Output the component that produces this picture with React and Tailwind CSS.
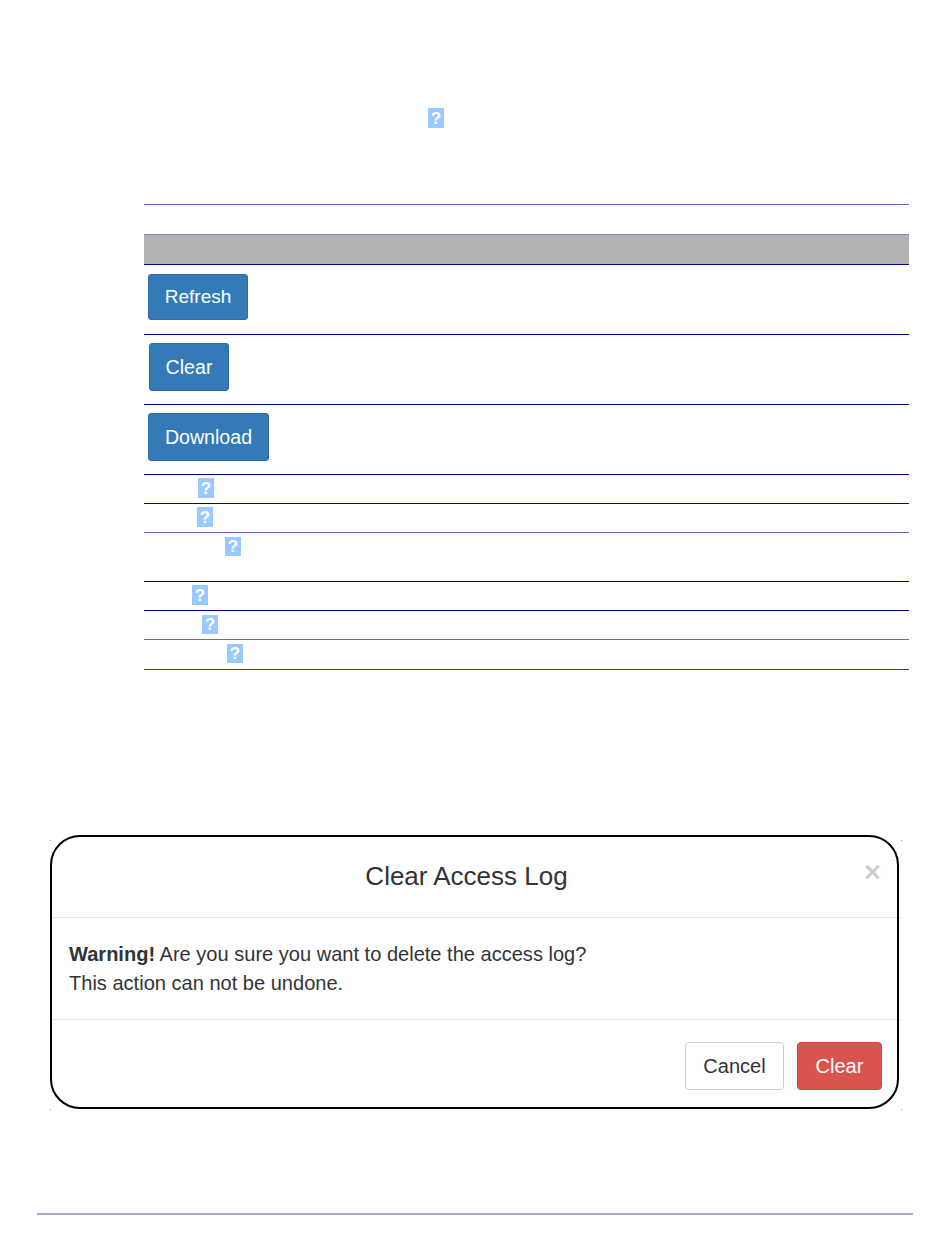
import React from "react";

function HelpIcon({ className = "h-5" }) {
    return (
        <span className={`flex w-4 items-center justify-center bg-[#99c9ff] text-[17px] leading-none font-bold text-white ${className}`}>
            ?
        </span>
    );
}

function ActionButton({ label, className = "" }) {
    return (
        <button className={`rounded-[3px] border border-[#2e6da4] bg-[#337ab7] text-white ${className}`}>
            {label}
        </button>
    );
}

export default function App() {
    return (
        <div className="h-[1260px] overflow-hidden bg-white pt-[108px] font-['Liberation_Sans',Arial,sans-serif] text-[#333333]">
            <div className="ml-[428px] h-5">
                <HelpIcon />
            </div>

            <div className="mt-[76px] ml-[144px] w-[765px]">
                <div className="h-[30px] border-t border-[#6a66c8]"></div>
                <div className="h-[31px] border-t border-b border-t-[#8480c0] border-b-[#000080] bg-[#b2b2b2]"></div>

                <div className="h-[70px] border-b border-[#000080] pt-[9px] pl-1">
                    <ActionButton label="Refresh" className="h-[46px] w-[100px] pt-px text-[19px]" />
                </div>
                <div className="h-[70px] border-b border-[#000080] pt-2 pl-[5px]">
                    <ActionButton label="Clear" className="h-12 w-20 pt-0.5 text-[19.6px]" />
                </div>
                <div className="h-[70px] border-b border-[#000080] pt-2 pl-1">
                    <ActionButton label="Download" className="h-12 w-[121px] pt-0.5 text-[19.6px]" />
                </div>

                <div className="h-[29px] border-b border-[#000080] pt-[3px] pl-[54px]">
                    <HelpIcon />
                </div>
                <div className="h-[29px] border-b border-[#6a66b8] pt-[3px] pl-[53px]">
                    <HelpIcon />
                </div>
                <div className="h-[49px] border-b border-[#000080] pt-1 pl-[81px]">
                    <HelpIcon className="h-[19px]" />
                </div>
                <div className="h-[29px] border-b border-[#000080] pt-[3px] pl-12">
                    <HelpIcon />
                </div>
                <div className="h-[29px] border-b border-[#6a66b8] pt-1 pl-[58px]">
                    <HelpIcon className="h-[19px]" />
                </div>
                <div className="h-[30px] border-b border-[#3d3a9c] pt-1 pl-[83px]">
                    <HelpIcon className="h-[19px]" />
                </div>
            </div>

            <div className="relative mt-[165px] ml-[50px] h-[274px] w-[851px]">
                <div className="flex h-[82px] items-center pr-5 pl-[19px]">
                    <h4 className="flex-1 text-center text-[26px] leading-none font-normal">Clear Access Log</h4>
                    <span className="mb-[7px] text-[29px] leading-none font-bold text-[#cfcfcf]">×</span>
                </div>
                <div className="border-t border-[#e5e5e5] pt-[22px] pl-[19px] text-[20.06px] leading-[29px]">
                    <strong>Warning!</strong> Are you sure you want to delete the access log?
                    <br />
                    This action can not be undone.
                </div>
                <div className="mt-[21px] border-t border-[#e5e5e5]">
                    <div className="flex justify-end gap-[13px] pt-[22px] pr-[19px]">
                        <button className="h-12 w-[99px] rounded-[4px] border border-[#cccccc] bg-white text-[20px]">Cancel</button>
                        <button className="h-12 w-[85px] rounded-[4px] border border-[#d43f3a] bg-[#d9534f] text-[20px] text-white">Clear</button>
                    </div>
                </div>

                {/* black frame and the crop dots sit on top of the dialog */}
                <span className="pointer-events-none absolute top-0 left-0 h-[274px] w-[849px] rounded-[30px] border-2 border-black"></span>
                <span className="absolute top-[5px] left-0 h-px w-px bg-[#999999]"></span>
                <span className="absolute top-[5px] -right-px h-px w-px bg-[#999999]"></span>
                <span className="absolute -right-px -bottom-px h-px w-px bg-[#999999]"></span>
                <span className="absolute -bottom-px left-0 h-px w-px bg-[#999999]"></span>
            </div>

            <div className="mt-[104px] ml-[37px] h-0.5 w-[876px] bg-[#a9a9d4]"></div>
        </div>
    );
}
